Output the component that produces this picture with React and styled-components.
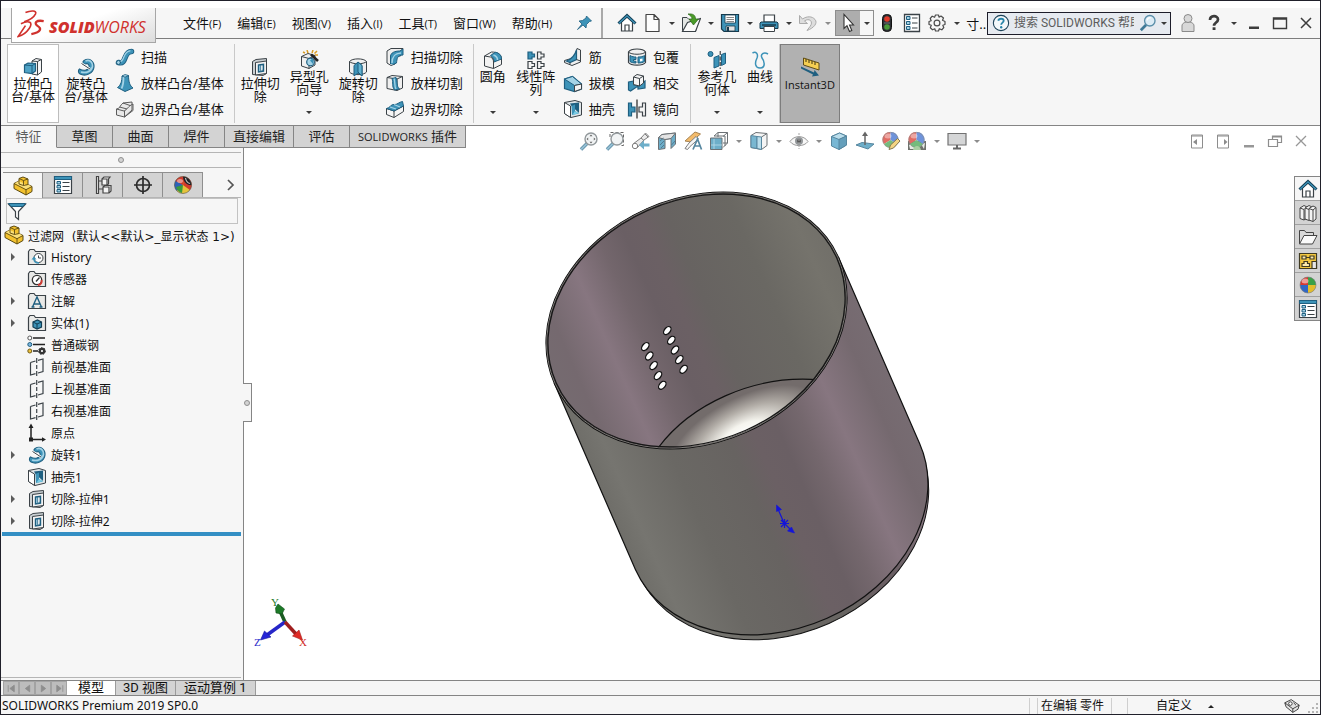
import React, { useState } from "react";
import styled, { createGlobalStyle } from "styled-components";

const GlobalStyle = createGlobalStyle`
  * {
    box-sizing: border-box;
  }

  body {
    margin: 0;
    background-color: #ffffff;
    color: #111111;
    font-family: "Noto Sans", "Noto Sans CJK SC", sans-serif;
    font-size: 13px;
  }

  button {
    margin: 0;
    padding: 0;
    border: none;
    background: none;
    color: inherit;
    font: inherit;
  }

  small {
    font-family: "Open Sans", sans-serif;
    font-size: 11px;
  }
`;

const Window = styled.div`
  display: flex;
  flex-direction: column;
  height: 100vh;
  min-height: 560px;
  border: 1px solid #20202a;
  overflow: hidden;
`;

const Icon = styled.svg`
  display: block;
  flex: none;
  width: ${(props) => props.$size || 20}px;
  height: ${(props) => props.$size || 20}px;
  opacity: ${(props) => (props.$faded ? 0.75 : 1)};
`;

const TitleBar = styled.header`
  display: flex;
  flex: none;
  height: 38px;
  border-top: 7px solid #ffffff;
  border-bottom: 1px solid #7d7d7d;
  background-color: #f6f6f6;
`;

const Logo = styled.a`
  position: relative;
  z-index: 1;
  display: flex;
  flex: none;
  align-items: center;
  height: 35px;
  width: 145px;
  margin-left: 10px;
  padding: 0 4px 2px 5px;
  border: 1px solid #a6a6a6;
  border-top: none;
  background: linear-gradient(160deg, #ffffff 45%, #dcdcdc);
  color: #d0312d;
  font-family: "Open Sans", sans-serif;
  font-size: 16px;
  font-style: italic;
  text-decoration: none;

  b {
    font-weight: 800;
  }
`;

const LogoMark = styled.svg`
  flex: none;
  width: 28px;
  height: 30px;
  margin-right: 4px;
`;

const LogoText = styled.span`
  padding-top: 5px;
`;

const MenuBar = styled.nav`
  display: flex;
  flex: none;
  align-items: center;
  gap: 16px;
  padding-left: 27px;
`;

const MenuItem = styled.button`
  font-size: 13px;
  line-height: 30px;
  white-space: nowrap;
`;

const PinButton = styled.button`
  padding: 0 7px 0 6px;
`;

const QuickTools = styled.div`
  display: flex;
  flex: none;
  align-items: center;
  gap: 5px;
  padding-left: 14px;
  border-left: 2px solid #a9a9a9;
`;

const ToolButton = styled.button`
  display: flex;
  flex: none;
  align-items: center;
  justify-content: center;
  min-width: 20px;
  height: 24px;
`;

const CaretMark = styled.span`
  display: block;
  flex: none;
  width: ${(props) => props.$wide || 9}px;

  &::after {
    content: "";
    display: block;
    width: 0;
    margin: 0 auto;
    border: 3px solid transparent;
    border-top-color: ${(props) => (props.$muted ? "#8c8c8c" : "#3a3a3a")};
    border-bottom: none;
  }
`;

const SelectTool = styled.div`
  display: flex;
  align-items: center;
  width: 39px;
  height: 26px;
  margin: 0 -2px;
  border: 1px solid #8d8d8d;

  button:first-child {
    width: 24px;
    height: 24px;
    background-color: #adadad;
  }

  button:last-child {
    flex: 1;
  }
`;

const WindowTools = styled.div`
  display: flex;
  flex: 1;
  align-items: center;
  justify-content: flex-end;
  gap: 6px;
  min-width: 0;
  padding-right: 4px;
`;

const SearchBox = styled.label`
  display: flex;
  flex: 0 1 184px;
  align-items: center;
  min-width: 90px;
  height: 23px;
  margin-right: 1px;
  padding: 0 0 0 4px;
  border: 1px solid #1d1d2a;
  background-color: #e6eaf0;

  input {
    flex: 1;
    min-width: 0;
    height: 20px;
    margin: 0 5px 0 4px;
    padding: 0;
    border: none;
    outline: none;
    background: none;
    color: #555555;
    font-family: Roboto, "Noto Sans CJK SC", sans-serif;
    font-size: 12px;
  }

  input::placeholder {
    color: #5c5c5c;
    opacity: 1;
  }
`;

const Ribbon = styled.section`
  display: flex;
  flex: none;
  height: 87px;
  padding: 5px 6px 2px;
  border-bottom: 1px solid #858585;
  background-color: #f6f6f6;
`;

const RibbonGroup = styled.div`
  display: flex;
  flex: none;
  padding: 0 ${(props) => props.$end}px 0 1px;
  border-right: 1px solid #c9c9c9;

  &:first-child {
    padding-left: 0;
  }
`;

const BigButton = styled.button`
  display: flex;
  flex: none;
  flex-direction: column;
  align-items: center;
  width: ${(props) => props.$width}px;
  height: 79px;
  padding: ${(props) => (props.$menu ? 5 : 12)}px 0 8px;
  border: 1px solid ${(props) => props.$edge || "transparent"};
  background-color: ${(props) => props.$fill || "transparent"};
  font-size: 13px;
  line-height: 13px;
  white-space: pre-line;
  text-align: center;

  ${CaretMark} {
    margin-top: auto;
  }

  small {
    line-height: 16px;
  }
`;

const SmallColumn = styled.div`
  display: grid;
  flex: none;
  grid-template-rows: repeat(3, 26px);
  margin-left: 2px;

  & + & {
    margin-left: 12px;
  }
`;

const SmallButton = styled.button`
  display: flex;
  align-items: center;
  gap: 6px;
  padding-bottom: 1px;
  font-size: 13px;
  white-space: nowrap;
`;

const CommandRow = styled.div`
  position: relative;
  z-index: 1;
  display: flex;
  flex: none;
  align-items: flex-start;
  height: 22px;
`;

const RibbonTabs = styled.nav`
  display: flex;
  flex: none;
`;

const RibbonTab = styled.button`
  min-width: 56px;
  height: 22px;
  padding: 0 8px;
  border-right: 1px solid #858585;
  border-bottom: 1px solid ${(props) => (props.$active ? "#f6f6f6" : "#858585")};
  background-color: ${(props) => (props.$active ? "#f6f6f6" : "#d3d3d3")};
  color: ${(props) => (props.$active ? "#5c5c5c" : "#222222")};
  font-family: Roboto, "Noto Sans CJK SC", sans-serif;
  font-size: 13px;
  line-height: 20px;
  white-space: nowrap;
`;

const ViewTools = styled.div`
  display: flex;
  flex: 1;
  align-items: center;
  gap: 6px;
  height: 30px;
  padding: 0 9px 0 113px;
`;

const Spacer = styled.span`
  flex: 1;
`;

const Main = styled.main`
  display: flex;
  flex: 1;
  min-height: 0;
`;

const SidePanel = styled.aside`
  position: relative;
  display: flex;
  flex: none;
  flex-direction: column;
  width: 243px;
  border-right: 1px solid #858585;
  background-color: #f6f6f6;
`;

const PanelGrip = styled.div`
  flex: none;
  display: flex;
  align-items: center;
  justify-content: center;
  height: 16px;
  margin: 4px 2px 4px 0;
  border-top: 1px solid #b5b5b5;
  border-bottom: 1px solid #b5b5b5;
`;

const GripDot = styled.span`
  width: 6px;
  height: 6px;
  border: 1px solid #8f8f8f;
  border-radius: 50%;
  background-color: #d3d3d3;
`;

const CollapseHandle = styled.button`
  position: absolute;
  z-index: 1;
  top: 235px;
  right: -9px;
  display: flex;
  align-items: center;
  justify-content: center;
  width: 9px;
  height: 39px;
  border: 1px solid #858585;
  border-left: none;
  background-color: #f6f6f6;
`;

const PanelTabs = styled.div`
  display: flex;
  flex: none;
  height: 26px;
  margin: 0 2px;
  border-bottom: 1px solid #b5b5b5;
`;

const PanelTab = styled.button`
  display: flex;
  align-items: center;
  justify-content: center;
  width: 40px;
  height: ${(props) => (props.$active ? 26 : 25)}px;
  border-top: 1px solid #8f8f8f;
  border-right: 1px solid #8f8f8f;
  background-color: ${(props) => (props.$active ? "#f6f6f6" : "#d3d3d3")};
`;

const MoreTabs = styled.button`
  margin-left: auto;
  padding-right: 1px;
`;

const FilterBox = styled.label`
  display: flex;
  flex: none;
  align-items: center;
  height: 26px;
  margin: 0 5px;
  border: 1px solid #c2c2c2;

  input {
    flex: 1;
    min-width: 0;
    border: none;
    outline: none;
    background: none;
    font-size: 12px;
  }
`;

const Tree = styled.ul`
  margin: 0;
  padding: 0;
  list-style: none;
  font-size: 12px;
`;

const TreeRow = styled.li`
  display: flex;
  align-items: center;
  gap: 4px;
  height: 22px;
  padding-left: ${(props) => (props.$root ? 3 : 7)}px;
  font-family: ${(props) => (props.$root ? '"DejaVu Sans", "Noto Sans CJK SC", sans-serif' : "inherit")};
  white-space: pre;
`;

const Expander = styled.button`
  width: 15px;
  height: 16px;
  padding-left: 3px;

  &::after {
    content: "";
    display: ${(props) => (props.disabled ? "none" : "block")};
    width: 0;
    border: 4px solid transparent;
    border-left-color: #5c5c5c;
    border-right: none;
  }
`;

const RollbackBar = styled.div`
  height: 4px;
  margin: 0 2px 0 1px;
  background-color: #338fc4;
`;

const PanelFoot = styled.div`
  height: 3px;
  margin: auto 2px 0 0;
  border-top: 1px solid #b5b5b5;
`;

const Viewport = styled.section`
  flex: 1;
  min-width: 0;
  background-color: #ffffff;
`;

const Scene = styled.svg`
  display: block;
  width: 100%;
  height: 100%;

  text {
    font-family: "Liberation Serif", serif;
    font-size: 11px;
  }
`;

const TaskPane = styled.nav`
  align-self: flex-start;
  flex: none;
  width: 26px;
  margin-top: 28px;
  border: 1px solid #858585;
  border-right: none;
`;

const TaskButton = styled.button`
  display: flex;
  align-items: center;
  justify-content: center;
  width: 25px;
  height: 24px;
  border-bottom: 1px solid #a0a0a0;
  background-color: ${(props) => (props.$active ? "#f6f6f6" : "#d3d3d3")};

  &:last-child {
    height: 23px;
    border-bottom: none;
  }
`;

const SheetBar = styled.nav`
  display: flex;
  flex: none;
  height: 16px;
  padding-left: 2px;
  border-top: 1px solid #858585;
  border-bottom: 1px solid #858585;
  background-color: #f6f6f6;
`;

const SheetStep = styled.button`
  display: flex;
  align-items: center;
  justify-content: center;
  width: 16px;
  height: 14px;
  border: 1px solid #a3a3a3;
  background-color: #bdbdbd;
`;

const SheetTab = styled.button`
  height: 14px;
  padding: 0 ${(props) => props.$pad || 8}px;
  border-right: 1px solid #9b9b9b;
  background-color: ${(props) => (props.$active ? "#ffffff" : "#d3d3d3")};
  font-family: Roboto, "Noto Sans CJK SC", sans-serif;
  font-size: 13px;
  line-height: 12px;
  white-space: nowrap;
`;

const StatusBar = styled.footer`
  display: flex;
  flex: none;
  align-items: center;
  height: 18px;
  padding: 2px 0 0 1px;
  background-color: #f6f6f6;
  font-size: 12px;
  line-height: 18px;
`;

const StatusCell = styled.span`
  width: ${(props) => props.$width}px;
  height: 16px;
  padding-left: ${(props) => props.$inset || 0}px;
  border-left: 1px solid #cfcfcf;
  line-height: 16px;
  white-space: nowrap;
`;

const CustomUnits = styled.button`
  display: flex;
  align-items: center;
  gap: 16px;
  margin-right: 70px;
  font-size: 12px;

  &::after {
    content: "";
    border: 3px solid transparent;
    border-top: none;
    border-bottom-color: #222222;
  }
`;

const line = "#3b4247";
const blue = "#3d93b8";
const pale = "#a5d3e6";
const deep = "#1f5f80";

const ball = (
  <g>
    <circle cx="10" cy="10" r="8.5" fill="#d9b62c" />
    <path d="M10 10 L3 5 A8.5 8.5 0 0 0 4 16 Z" fill="#2c62b8" />
    <path d="M10 10 L2.5 6 A8.5 8.5 0 0 1 12 1.700Z" fill="#d33a2c" />
    <path d="M10 10 L4 16 A8.500 8.500 0 0 0 17 15 Z" fill="#e5c33b" />
    <path d="M10 10 L3 12 A8.500 8.500 0 0 0 9 18 Z" fill="#3a9b3c" />
    <path d="M10 10 L12 1.7 A8.500 8.500 0 0 1 17 15 Z" fill="#d33a2c" />
    <path d="M10 1.500A8.500 8.500 0 0 1 18.500 10C15 11 10 7 10 1.500Z" fill="#1f2326" />
    <path d="M12.500 3C13 6 15 8 17 8.500" fill="none" stroke="#c9bebe" strokeWidth="1.200" />
    <ellipse cx="7" cy="6" rx="3" ry="2" fill="#fff" opacity=".45" />
    <circle cx="10" cy="10" r="8.500" fill="none" stroke="#555" strokeWidth=".6" />
  </g>
);

const taskBall = (
  <g>
    <path d="M10 10V2A8 8 0 0 0 2 10Z" fill="#d83a30" />
    <path d="M10 10H18A8 8 0 0 0 10 2Z" fill="#3aa148" />
    <path d="M10 10V18A8 8 0 0 0 18 10Z" fill="#e3bd2c" />
    <path d="M10 10H2A8 8 0 0 0 10 18Z" fill="#3167c4" />
    <ellipse cx="7" cy="6" rx="3.500" ry="2.500" fill="#fff" opacity=".5" />
    <circle cx="10" cy="10" r="8" fill="none" stroke="#777" strokeWidth=".6" />
  </g>
);

const viewBall = (
  <g>
    <path d="M9.500 9V1A7.500 7.500 0 0 0 3 13Z" fill="#d83a30" />
    <path d="M9.500 9L16 13A7.500 7.500 0 0 0 9.500 1Z" fill="#3e6fd0" />
    <path d="M9.500 9L3 13A7.500 7.500 0 0 0 16 13Z" fill="#48a552" />
    <ellipse cx="7" cy="5" rx="3.500" ry="2.500" fill="#fff" opacity=".4" />
    <circle cx="9.500" cy="9" r="7.700" fill="none" stroke="#666" strokeWidth=".6" />
  </g>
);

const folder = (
  <path d="M1.500 4.500L3 2.500H7L8.500 4.500H18.500V17.500H1.500Z" fill="#e9e9e7" stroke={line} strokeWidth="1.200" />
);

const house = (
  <g>
    <path d="M4.500 9V18H15.500V9L10 4Z" fill="#fff" stroke={line} strokeWidth="1.200" />
    <path d="M8 18V12H12V18" fill="none" stroke={line} strokeWidth="1.200" />
    <path d="M1.500 10.500L10 2.500L18.500 10.500" fill="none" stroke="#123e55" strokeWidth="3" />
    <path d="M2 10.300L10 2.800L18 10.300" fill="none" stroke={blue} strokeWidth="1.300" />
  </g>
);

const magnifier = (
  <g>
    <path d="M2 18.500L8 12.500" stroke={deep} strokeWidth="3.400" />
    <path d="M2 18.500L8 12.500" stroke="#6fa9c4" strokeWidth="2" />
    <circle cx="12" cy="8" r="6" fill="#eef1f2" stroke="#6f777b" strokeWidth="1.400" />
  </g>
);

const cutExtrude = (
  <g>
    <path d="M2.500 4.500L6 2.500L16.500 1.500V16.500L13 18.500L2.500 17.500Z" fill="#c9cfd2" stroke={line} />
    <path d="M5.500 5.500L16.500 4V16.500L5.500 18Z" fill="#f2f2f2" stroke={line} />
    <path d="M8.500 8L13.500 7.200V14.200L8.500 15Z" fill={pale} stroke={deep} strokeWidth="1.400" />
    <path d="M10.700 8V14.500L13 13V8Z" fill="#fff" stroke={deep} strokeWidth=".8" />
  </g>
);

const revolve = (
  <g>
    <path
      d="M8 3.500C14 0 18.500 5 18 10C17.500 16 10 20 4 17C2 16 2 13 3.500 12C7 14 12 14 13 10C13.500 7.500 11.500 6 9.500 7C7 7.500 6 5 8 3.500Z"
      fill={blue}
      stroke={deep}
      strokeWidth="1.100"
    />
    <path d="M9.500 4C14 2 17 6 16.500 9.500C15.500 14.500 10 16.500 5 15" fill="none" stroke={pale} strokeWidth="1.600" />
    <path d="M5.500 6.500L14 12" stroke="#fff" strokeWidth="2.600" />
    <path d="M5.500 6.500L14 12" stroke={line} strokeWidth="1" />
  </g>
);

const shell = (
  <g>
    <path d="M1.500 3.500L12 1.500L18.500 3.500V16L8 18.500L1.500 14.500Z" fill="#dfe5e8" stroke={line} />
    <path d="M1.500 3.500L7.500 7V18.500L1.500 14.500Z" fill="#fff" stroke={line} />
    <path d="M7 4.500L16 3.500V14L8.500 7Z" fill={deep} />
    <path d="M8.500 7L12 5.500V12L16 14.500L9 16Z" fill={blue} />
    <path d="M12 12L16 14.300L9.500 15.800Z" fill="#79cde6" />
  </g>
);

const plane = (
  <path
    d="M3.500 5.500L8.500 4M11 3.300L16 2V14.500L11 16M8.500 16.700L3.500 18V5.500M9.700 1V6M9.700 8V12M9.700 14V19"
    fill="none"
    stroke={line}
    strokeWidth="1.200"
  />
);

const listBanner = (
  <g>
    <path d="M1.500 1.500H18.500V18.500H1.500Z" fill="#fff" stroke={line} strokeWidth="1.200" />
    <path d="M1.500 1.500H18.500V4.500H1.500Z" fill={blue} stroke={deep} />
    <path d="M4 6.500H7.500V9H4ZM4 10.500H7.500V13H4ZM4 14.500H7.500V17H4Z" fill={pale} stroke={deep} />
    <path d="M9.500 7.500H16.500M9.500 11.500H16.500M9.500 15.500H16.500" stroke={line} strokeWidth="1.200" />
  </g>
);

const part = (
  <g strokeLinejoin="round">
    <path d="M1 7.500L6 5V2.500L10 1L15 3V8.500L19 10.500V15.500L13 19L1 12.500Z" fill="#f2c12e" stroke="#5c4a10" />
    <path d="M1.500 7.500L6 5L10 7L13.500 9.500L15 8.500L18.500 10.500L13 13.500Z" fill="#fae07a" />
    <path d="M1 7.500L13 13.700V19M13 13.700L19 10.500M6 2.500L10.500 4.500L15 3M10.500 4.500V9.500L15 8.500M6 5V8L10.500 9.500" fill="none" stroke="#5c4a10" strokeWidth=".9" />
  </g>
);

const icons = {
  taskBall,
  pin: <path d="M12.500 3L17.500 8L15.500 8.500L12.500 11.500L12 15L9 12L3.500 16.500L8 11L5 8L8.500 7.500L12 5Z" fill={blue} stroke={deep} strokeWidth=".8" />,
  house,
  file: <path d="M4 1.500H12L17 6.500V18.500H4ZM12 1.500V6.500H17" fill="#fdfdfd" stroke="#444" strokeWidth="1.200" strokeLinejoin="round" />,
  open: (
    <g>
      <path d="M1.500 17.500V4.500H6L8 6.500H15V17.500Z" fill="#e3e6e4" stroke={line} />
      <path d="M1.500 18.500L6.500 9.500L19.500 5.500L14.500 18.500Z" fill="#fafafa" stroke={line} strokeWidth="1.200" />
      <path d="M7 1C12 .5 14.500 2 14.500 6H17.500L12.500 12L8 6H11C11 4 9.500 2.500 7 1Z" fill="#4a9b28" stroke="#29661a" strokeWidth=".7" />
    </g>
  ),
  save: (
    <g>
      <path d="M1.500 1.500H18.500V18.500H4L1.500 16Z" fill={blue} stroke="#173a4d" strokeWidth="1.200" />
      <path d="M5 2H15.500V10H5Z" fill="#fff" stroke="#173a4d" strokeWidth=".8" />
      <path d="M6.500 4.500H14M6.500 6.500H14M6.500 8.500H14" stroke="#888" />
      <path d="M6 13H15V18H6Z" fill="#e3e3e3" stroke="#173a4d" strokeWidth=".8" />
      <path d="M8 14V18" stroke="#173a4d" strokeWidth="2" />
    </g>
  ),
  print: (
    <g>
      <path d="M5 2H15.500V9H5Z" fill="#fff" stroke={line} strokeWidth="1.200" />
      <path d="M2 9H18L19 10V15.500H1V10Z" fill={blue} stroke="#173a4d" />
      <path d="M3 12H17" stroke="#173a4d" strokeWidth="1.500" />
      <path d="M5 13.500H15.500V18.500H5Z" fill="#fff" stroke={line} />
    </g>
  ),
  undo: <path d="M1.500 2.500V10.500H9.500L6.500 8C11 4.500 16 8.500 12 13.500L9 17.500C16 15 20 10 17 6.500C14 3 9 3 4.500 6Z" fill="#ddd" stroke="#aaa" />,
  cursor: <path d="M6 1.500V15.500L9 12.700L11.500 18.500L13.800 17.500L11.500 12H15.500Z" fill="#fff" stroke="#333" strokeWidth="1.100" />,
  traffic: (
    <g>
      <rect x="5.500" y="1.500" width="9" height="17" rx="4" fill="#2d3034" stroke="#111" />
      <circle cx="10" cy="6" r="2.800" fill="#e13a2a" />
      <circle cx="10" cy="14" r="2.800" fill="#4b9a3a" />
      <path d="M7 10H13" stroke="#70757a" />
    </g>
  ),
  list: (
    <g>
      <path d="M2.500 1.500H17.500V18.500H2.500Z" fill="#fff" stroke={line} strokeWidth="1.300" />
      <path d="M4.500 3.500H8V6.500H4.500ZM4.500 8.500H8V11.500H4.500ZM4.500 13.500H8V16.500H4.500Z" fill={pale} stroke={deep} />
      <path d="M10 5H15.500M10 10H15.500M10 15H15.500" stroke={line} strokeWidth="1.200" />
    </g>
  ),
  gear: (
    <g fill="none" stroke="#4b4b4b" strokeWidth="1.200" strokeLinejoin="round">
      <path d="M8.500 2H11.500L12 4.200L14 3L16.500 5L15.500 7.300L18 8.500V11.500L15.800 12.200L16.800 14.500L14.800 16.800L12.300 15.700L11.500 18H8.500L7.800 15.800L5.500 16.800L3.300 14.800L4.300 12.300L2 11.500V8.500L4.200 7.800L3.200 5.500L5.200 3.200L7.600 4.300Z" />
      <circle cx="10" cy="10" r="2.900" />
    </g>
  ),
  helpRing: (
    <g>
      <circle cx="10" cy="10" r="8.500" fill="#f3f8fb" stroke="#1c4258" strokeWidth="1.200" />
      <path d="M7 7.500C7.500 4.500 13 4.500 13 7.500C13 9.500 10.200 9.700 10.200 12" fill="none" stroke="#2683a8" strokeWidth="2" />
      <circle cx="10.200" cy="14.700" r="1.300" fill="#2683a8" />
    </g>
  ),
  lens: (
    <g>
      <path d="M2 18L8 12" stroke="#3f7896" strokeWidth="3" />
      <circle cx="12" cy="7.500" r="5.800" fill="#dcebf5" stroke="#5a8ea9" strokeWidth="1.500" />
      <path d="M9 7C9.500 5 11 4 13 4" fill="none" stroke="#fff" strokeWidth="1.500" />
    </g>
  ),
  user: (
    <g fill="#d8d8d8" stroke="#8a8a8a">
      <path d="M4 18.500V13C4 10 7 9 10 9S16 10 16 13V18.500Z" />
      <circle cx="10" cy="5.500" r="4" />
    </g>
  ),
  help: (
    <g>
      <path d="M6 7C6 2 14 2 14 6.500C14 9.500 10 9.500 10 12.800" fill="none" stroke="#3c3c3c" strokeWidth="2.700" />
      <path d="M8.600 14.300H11.500V17H8.600Z" fill="#3c3c3c" />
    </g>
  ),
  minimize: <path d="M5 13.500H15V16H5Z" fill="#3c3c3c" />,
  maximize: <path d="M3.500 5H16.500V15.500H3.500ZM3.500 6H16.500" fill="none" stroke="#3c3c3c" strokeWidth="1.400" />,
  close: <path d="M5 5L15 15M15 5L5 15" stroke="#3c3c3c" strokeWidth="1.500" />,
  extrude: (
    <g>
      <path d="M9 4L13 1.500L18.500 2.500V15L14.500 18L9 17Z" fill="#f5f5f5" stroke={line} />
      <path d="M14.500 4.500V18M9 4L14.500 4.500L18.500 2.500" fill="none" stroke={line} />
      <path d="M1.500 8L5 6L12.500 6.500V14L9 16.500L1.500 15.500Z" fill="#4fa3c6" stroke={deep} strokeWidth="1.200" />
      <path d="M1.500 8L9 8.700L12.500 6.500M9 8.700V16.500" fill="none" stroke={deep} />
    </g>
  ),
  revolve,
  sweep: (
    <g fill="none" strokeLinecap="round">
      <path d="M3.500 15.500C12 18 8 4.500 16.500 4.500" stroke={deep} strokeWidth="5.500" />
      <path d="M3.500 15.500C12 18 8 4.500 16.500 4.500" stroke={blue} strokeWidth="3.800" />
      <path d="M4 14.500C10 16 7 5 15 3.800" stroke={pale} strokeWidth="1.200" />
      <circle cx="3.500" cy="15.500" r="2" fill={pale} stroke={deep} />
    </g>
  ),
  loft: (
    <g>
      <path d="M7 3L13.500 2.500C13.500 9 15 13 18 15L10 18.500L2.500 14.500C6 12 7 8 7 3Z" fill={blue} stroke={deep} />
      <path d="M8.500 4C8.500 9 8 13 6.500 15.500" fill="none" stroke={pale} strokeWidth="1.800" />
      <path d="M7 3L10 4.200L13.500 2.500L10 1.500Z" fill={pale} stroke={deep} strokeWidth=".8" />
    </g>
  ),
  boundary: (
    <g fill="#e8e8e8" stroke="#5c5c5c">
      <path d="M1.500 10C5 10 5 6 8 4L17 3V11L9.500 18L1.500 16Z" />
      <path d="M1.500 10L9 12C12 11 13 7 18 5V11.500L9.500 18V12M4.500 8L12 10M8 4L15 6.500" fill="none" />
    </g>
  ),
  cutExtrude,
  holeWizard: (
    <g>
      <path d="M2.500 6.500L9 3.500L16 5.500V15L10 18.500L2.500 16Z" fill="#f0f0f0" stroke={line} />
      <path d="M2.500 6.500L10 8.500V18.500M10 8.500L16 5.500" fill="none" stroke={line} />
      <circle cx="11.500" cy="12" r="3.800" fill={pale} stroke={deep} strokeWidth="1.200" />
      <path d="M11 10.500L14 8V14Z" fill={blue} />
      <path d="M12 4.500L19 11" stroke="#222" strokeWidth="2.500" />
      <path d="M4 2L6 3M8 0L9 3M14 0L13 3M18 1L15.500 3.500M19 5L16 5" stroke="#d79b24" strokeWidth="1.500" />
    </g>
  ),
  cutRevolve: (
    <g>
      <path d="M1.500 4.500C4 1 16 1 18.500 4.500V15C16 18.500 4 18.500 1.500 15Z" fill="#f0f0f0" stroke={line} />
      <path d="M1.500 4.500C4 7.500 16 7.500 18.500 4.500" fill="none" stroke={line} />
      <path d="M10 5L14 8.500V19L10 16L6 19V8.500Z" fill={blue} stroke={deep} />
      <path d="M10 5L14 8.500V19L10 15Z" fill="#62b3d1" stroke={deep} />
    </g>
  ),
  cutSweep: (
    <g>
      <path d="M2 4L6 1.500H18L15.500 4V9C11 9 10 12 10 17L6 18.500L2 16Z" fill="#eee" stroke={line} />
      <path d="M5.500 17V9C6 6 9 4 15 4L18 2V8C12 8 12 12 11.500 16L8 17.500" fill={blue} stroke={deep} />
      <path d="M7 16C7 10 9 6.500 16 6" fill="none" stroke={pale} strokeWidth="1.500" />
    </g>
  ),
  cutLoft: (
    <g>
      <path d="M2 4.500L7 2.500L17.500 3.500V15L12 17.500L2 15.500Z" fill="#f0f0f0" stroke={line} />
      <path d="M2 4.500L12 6L17.500 3.500M12 6V17.500" fill="none" stroke={line} />
      <path d="M7 5.500L11 4.500C13 9 11 13 14.500 16L9.500 17C6.500 13 8.500 10 7 5.500Z" fill={blue} stroke={deep} />
      <path d="M9 5.500C10.500 9 9 13 11 16" fill="none" stroke={pale} strokeWidth="1.300" />
    </g>
  ),
  cutBoundary: (
    <g>
      <path d="M1.500 9.500L9 12L18.500 7V12.500L9 18.500L1.500 15.500Z" fill="#f5f5f5" stroke={line} />
      <path d="M1.500 9.500C5 9 6 5 9 5.500C12 6 14 3 17.500 2.500L18.500 7L9 12Z" fill={blue} stroke={deep} />
      <path d="M5 8L11 10M9 5.500L15 8" stroke={pale} strokeWidth="1.300" />
      <path d="M9 12V18.500" stroke={line} />
    </g>
  ),
  fillet: (
    <g>
      <path d="M1.500 6L8.500 2C14 2 18.500 4 18.500 9V14.500L10.500 18.500L1.500 16Z" fill="#f2f2f2" stroke={line} />
      <path d="M7.500 5.500C9.500 4 11 3 12.500 2.300C16 3 18.500 5 18.500 9L11 12C11 9 10 7 7.500 5.500Z" fill={blue} stroke={deep} />
      <path d="M1.500 6L7.500 7C9.500 8 10.500 9.500 10.500 12V18.500" fill="none" stroke={line} />
      <path d="M10.500 5C13.500 6 14.500 8 14.500 10" fill="none" stroke={pale} strokeWidth="1.600" />
    </g>
  ),
  pattern: (
    <g fill="#f5f5f5" stroke={line} strokeWidth="1.200">
      <path d="M2 2H6V4H8.500V7H6V9H2Z" fill={blue} stroke={deep} />
      <path d="M11.500 2H15V4H18V7H15V9H11.500ZM2 11.500H6V13.500H8.500V16.500H6V18.500H2ZM11.500 11.500H15V13.500H18V16.500H15V18.500H11.500Z" />
    </g>
  ),
  rib: (
    <g>
      <path d="M14 1.500L17.500 3V15L9 18.500L1.500 15.500V13.500L11.500 10.500Z" fill="#f0f0f0" stroke={line} />
      <path d="M13.500 3V12.500L7 15.500L3.500 14C9 12 12 8 13.500 3Z" fill={blue} stroke={deep} strokeWidth="1.200" />
      <path d="M7 15.500V17.500M13.500 12.500L17.500 14" fill="none" stroke={line} />
    </g>
  ),
  draft: (
    <g>
      <path d="M1.500 6L9.500 3.500L18.500 11V16L11.500 18.500L1.500 15.500Z" fill={blue} stroke={deep} strokeWidth="1.200" />
      <path d="M1.500 6L9.500 3.500L18.500 11L11.500 12.500Z" fill={pale} stroke={deep} />
      <path d="M11.500 12.500L18.500 11V16L11.500 18.500Z" fill="#f3f3f3" stroke={line} />
    </g>
  ),
  shell,
  wrap: (
    <g>
      <path d="M1.500 5C4 1 16 1 18.500 5V15.500C16 19 4 19 1.500 15.500Z" fill="#f0f0f0" stroke={line} strokeWidth="1.200" />
      <path d="M1.500 5C4 8 16 8 18.500 5" fill="none" stroke={line} />
      <path d="M3 8.500C5 9.800 7 10 9 10V12.500H6.500V14L9 14.300V16C6 16 4.500 15.500 3 14.500ZM11 10C14 10 16 9.500 17.500 8.500V14.500C16 15.500 14 16 11 16Z" fill={blue} stroke={deep} />
      <path d="M13 12L15.500 11.500V14L13 14.500Z" fill="#fff" />
    </g>
  ),
  intersect: (
    <g>
      <path d="M1.500 9L7 8V12H13L18 8V15L11 16V13L3.500 18L1.500 17Z" fill={blue} stroke={deep} strokeWidth="1.200" />
      <path d="M6.500 4L10 1.500L16.500 3V10L12.500 13L6.500 11.500Z" fill="#f5f5f5" stroke={line} />
      <path d="M6.500 4L12.500 5.500L16.500 3M12.500 5.500V13" fill="none" stroke={line} />
    </g>
  ),
  mirror: (
    <g>
      <path d="M1.500 4H4.500V8H8V13H4.500V17H1.500Z" fill={blue} stroke={deep} strokeWidth="1.200" />
      <path d="M18.500 4H15.500V8H12V13H15.500V17H18.500Z" fill="#f5f5f5" stroke={line} strokeWidth="1.200" />
      <path d="M10 .5V19.500" stroke="#222" strokeWidth="1.200" />
    </g>
  ),
  reference: (
    <g>
      <circle cx="3.500" cy="4" r="2.500" fill={blue} stroke={deep} />
      <path d="M7 7.500L12 5.500V16L7 18Z" fill={blue} stroke={deep} />
      <path d="M14.500 4.500L18.500 3V13.500L14.500 15.500Z" fill={blue} stroke={deep} />
      <path d="M13.200 1V19" stroke="#222" strokeDasharray="4 1.500" />
    </g>
  ),
  curves: <path d="M2.500 3C6 1 8.500 4 7 8C4.500 13 5 18 10 18C16 18 14.500 11 12 8C10 4 14 1.500 18 4" fill="none" stroke={blue} strokeWidth="1.500" />,
  instant: (
    <g>
      <path d="M3.500 1L19 6V13L3.500 8Z" fill="#f5cf52" stroke="#5e4c16" />
      <path d="M6 2V5M9 3V6M12 4V7M15 5V8" stroke="#3c3210" />
      <path d="M1 9.500L14 15.500L14.500 13L19 18.500L12 19.500L13 17.500L1 11.500Z" fill={deep} />
    </g>
  ),
  zoomFit: (
    <g>
      {magnifier}
      <path d="M12 3.500L13.500 5.200H10.500ZM12 12.500L13.500 10.800H10.500ZM7.500 8L9.200 6.500V9.500ZM16.500 8L14.800 6.500V9.500Z" fill="#333" />
    </g>
  ),
  zoomArea: (
    <g>
      <path d="M5 6V1.500H18.500V14.500H15" fill="none" stroke="#333" strokeDasharray="3 2" />
      {magnifier}
    </g>
  ),
  previousView: (
    <g>
      <path d="M2 13L10 7L14.500 2L18 5.500L13 9L6 17Z" fill="#e5e5e5" stroke="#555" />
      <path d="M10 7L13 9.500M14 3L17 6" stroke="#555" />
      <circle cx="4" cy="15" r="2.700" fill="#fff" stroke="#555" />
      <path d="M18.500 12.500H13V9.500L8 14L13 18.500V15.500H18.500Z" fill={blue} />
    </g>
  ),
  section: (
    <g>
      <path d="M1.500 6.500L5 3.500L18.500 2V13L14 17.500V7.500L8 8.500V17.500L1.500 18.500Z" fill={blue} stroke={line} />
      <path d="M1.500 6.500L5 3.500L18.500 2L14 7.500L8 8.500Z" fill="#dcdcdc" stroke={line} />
      <path d="M3 10L6.500 7M3 14L7 10M14.500 14L18 10M4 17L7 14" stroke="#164a66" strokeWidth=".9" />
    </g>
  ),
  dynamicNotes: (
    <g>
      <path d="M2 10L12 1L17.500 3L8 11Z" fill="#f0a53a" stroke="#895b1a" />
      <path d="M2 17.500L6 12L13 5.500L15.500 8L7 15.500L4.500 18.500Z" fill="#f3f3f3" stroke="#555" />
      <path d="M10 18.500L14.500 8L18.500 18.500M12 15H17" fill="none" stroke={deep} strokeWidth="1.700" />
    </g>
  ),
  orientation: (
    <g>
      <path d="M5 5L9 1.500H18.500V12L14 16.500" fill="#fff" stroke={line} />
      <path d="M14 5.500L18.500 1.500M14 12H18.500M9 1.500V6M5 5H16V15" stroke={line} fill="none" />
      <path d="M1.500 7H13V18.500H1.500Z" fill={blue} stroke={line} />
      <path d="M5 8V18M2 14H13" stroke={pale} strokeWidth=".8" />
    </g>
  ),
  displayStyle: (
    <g>
      <path d="M2 4.500L7 1.500L18 2.500V14.500L12.500 18.500L2 16.500Z" fill="#f2f2f2" stroke={line} />
      <path d="M2 4.500L8 5.500V17.500L2 16.500Z" fill="#4d9fc2" stroke={deep} />
      <path d="M8 5.500L12.500 6V18.500L8 17.500Z" fill={pale} stroke={deep} />
      <path d="M12.500 6L18 2.500" stroke={line} />
    </g>
  ),
  eye: (
    <g>
      <path d="M1 10.500C5 4 15 4 19 10.500C15 16 5 16 1 10.500Z" fill="#f5f5f5" stroke="#777" />
      <circle cx="10" cy="10" r="4" fill="#707579" />
      <circle cx="10" cy="10" r="2" fill="#222" />
      <path d="M10 2V18" stroke="#888" strokeDasharray="2 1" />
    </g>
  ),
  cube: (
    <g>
      <path d="M2.500 5.500L10.500 2L17.500 5V14L10 18.500L2.500 15Z" fill="#4ba0c6" stroke={deep} />
      <path d="M2.500 5.500L10.500 2L17.500 5L10 8.500Z" fill={pale} stroke={deep} />
      <path d="M10 8.500V18.500L17.500 14V5Z" fill="#327fa5" stroke={deep} />
    </g>
  ),
  upright: (
    <g>
      <path d="M1 14L7 11.500L19 13L13 18Z" fill={blue} stroke={deep} />
      <path d="M10 14V3" stroke="#333" strokeWidth="1.500" />
      <path d="M10 .5L13 5H7Z" fill="#333" />
    </g>
  ),
  appearance: (
    <g>
      {viewBall}
      <path d="M8 18.500L9.500 14L16.500 7.500L19 10L12.500 17Z" fill="#efc65a" stroke="#5e4c16" />
    </g>
  ),
  sceneBall: (
    <g>
      <path d="M1 10H19V19H1Z" fill="#3f433d" />
      <path d="M2 14L6 12L8 18H3ZM14 13L18 12L17 18Z" fill="#dfe3dd" />
      {viewBall}
      <path d="M6 19C7 13.500 13 13.500 14 19Z" fill="#8dc083" />
    </g>
  ),
  monitor: (
    <g>
      <path d="M1 2.500H19V14H1Z" fill="#c8c9ca" stroke="#444" strokeWidth="1.200" />
      <path d="M10 14V17" stroke="#333" strokeWidth="2" />
      <path d="M6 17.500H14" stroke="#333" strokeWidth="2" />
    </g>
  ),
  paneLeft: (
    <g>
      <path d="M4.500 4H15.500V17H4.500Z" fill="none" stroke="#8d8d8d" />
      <path d="M4.500 5H15.500" stroke="#8d8d8d" />
      <path d="M10 8V14L6 11Z" fill="#8d8d8d" />
    </g>
  ),
  paneRight: (
    <g>
      <path d="M4.500 4H15.500V17H4.500Z" fill="none" stroke="#8d8d8d" />
      <path d="M4.500 5H15.500" stroke="#8d8d8d" />
      <path d="M11 8V14L14.500 11Z" fill="#8d8d8d" />
    </g>
  ),
  minimizeDoc: <path d="M5 14H15V16.500H5Z" fill="#979797" />,
  restoreDoc: <path d="M3.500 8.500H12.500V15.500H3.500ZM7.500 8V5H16.500V11.500H13M7.500 6H16.500" fill="none" stroke="#8d8d8d" strokeWidth="1.200" />,
  closeDoc: <path d="M5 5L15 15M15 5L5 15" stroke="#979797" strokeWidth="1.300" />,
  part,
  listBanner,
  configs: (
    <g fill="#f3f3f3" stroke="#444" strokeWidth="1.200">
      <path d="M3.500 1.500H5.500V18.500H3.500ZM5.500 6H9M5.500 14H10" />
      <path d="M9 4L11 2H17L15.500 4V9L14 10H9ZM10 12L12 10.500H18V16L16 18H10Z" />
      <path d="M9 4H14V10M10 12H16V18" fill="none" />
    </g>
  ),
  target: (
    <g fill="none" stroke="#2d2d2d" strokeWidth="1.700">
      <circle cx="10" cy="10" r="6.500" />
      <path d="M10 1V19M1 10H19" />
    </g>
  ),
  ball,
  funnel: (
    <g>
      <path d="M1.500 3H18.500L11.500 10.500V18.500L8.500 16V10.500Z" fill="#fff" stroke={line} strokeWidth="1.200" />
      <path d="M1.500 2.500H18.500L16 5.500H4Z" fill={blue} stroke={deep} />
    </g>
  ),
  history: (
    <g>
      {folder}
      <circle cx="11.500" cy="11" r="4.500" fill="#fff" stroke={line} />
      <path d="M11.500 8.500V11H14" fill="none" stroke={line} />
      <path d="M12 16C8 16 7 14 7 12" fill="none" stroke={blue} strokeWidth="1.500" />
      <path d="M4.500 12.500L7 9.500L9.500 12.500Z" fill={blue} />
    </g>
  ),
  sensors: (
    <g>
      {folder}
      <circle cx="10" cy="11" r="4.700" fill="#fff" stroke="#333" strokeWidth="1.300" />
      <path d="M9 12.500L12.500 8.500" stroke="#333" strokeWidth="1.300" />
      <path d="M11 16C14 16 15 13 14.500 11" fill="none" stroke="#cf3b34" strokeWidth="2" />
    </g>
  ),
  annotations: (
    <g>
      {folder}
      <path d="M5.500 16L10 6L14.500 16M7 13H13M4.500 16H7.500M12.500 16H15.500" fill="none" stroke={deep} strokeWidth="1.400" />
    </g>
  ),
  bodies: (
    <g>
      {folder}
      <path d="M6 9L10.500 7L14.500 9V14L10 16L6 14Z" fill={blue} stroke="#123e55" strokeWidth="1.200" />
      <path d="M6 9L10 11V16M10 11L14.500 9" fill="none" stroke="#123e55" />
    </g>
  ),
  material: (
    <g>
      <path d="M6 3H18M6 9.500H18M6 16H11" stroke="#222" strokeWidth="1.700" />
      <circle cx="2.800" cy="3" r="2" fill="#fff" stroke="#555" />
      <circle cx="2.800" cy="9.500" r="2" fill="#7bb5df" stroke={deep} />
      <circle cx="2.800" cy="16" r="2" fill="#edc13d" stroke="#715b15" />
      <circle cx="15" cy="16" r="2.200" fill="#fff" stroke="#333" strokeWidth="2.200" />
      <circle cx="15" cy="16" r="3.500" fill="none" stroke="#333" strokeDasharray="1.500 1.500" />
    </g>
  ),
  plane,
  origin: (
    <g>
      <path d="M4 4V16.500H16" fill="none" stroke="#222" strokeWidth="1.500" />
      <path d="M4 .5L6.500 5H1.500ZM19 16.500L15 14.200V18.800ZM2 14.500H6V18.500H2Z" fill="#222" />
    </g>
  ),
  library: (
    <g fill="#f3f3f3" stroke="#444">
      <path d="M2 5L6 2.500L9 4V15L6 17L2 15.500Z" />
      <path d="M7 5L11 2.500L14 4V15.500L11 17.500L7 16Z" />
      <path d="M11 5.500L15 3L18 4.500V16L15 18.500L11 17Z" />
      <path d="M2 5L6 6.500V17M7 5L11 6.500M11 5.500L15 7V18.500M15 7L18 4.500" fill="none" />
    </g>
  ),
  explorer: (
    <g stroke="#444" strokeLinejoin="round">
      <path d="M1.500 17V3.500H6.500L8 5.500H15.500V9" fill="#d9d9d9" />
      <path d="M1.500 17L6 8.500H19L14.500 17Z" fill="#fafafa" />
    </g>
  ),
  palette: (
    <g stroke="#3f3a22" strokeWidth="1.200">
      <path d="M1.500 2.500H18.500V17.500H1.500Z" fill="#f4c840" />
      <path d="M4 5H8V8H4ZM12 5H16V8H12ZM8 6.500H12" fill="#fbe9ae" />
      <path d="M6 10.500H9.500V12.500H11.500V15.500H4V12.500H6Z" fill="#fbe9ae" />
      <path d="M14 10.500H18.500V17.500H14Z" fill="#e8e8e8" />
    </g>
  ),
  tag: (
    <g fill="#e3e3e3" stroke="#333" strokeWidth="1.100">
      <path d="M1 6L9 2L19 9L17.500 14L11 18L2.500 11Z" />
      <path d="M1 6L11 13.500L19 9M11 13.500V18" fill="none" />
      <circle cx="8" cy="7" r="2.200" fill="#fff" />
      <path d="M12 6L15 9" />
    </g>
  ),
};

const Glyph = ({ name, size, faded }) => (
  <Icon viewBox="0 0 20 20" $size={size} $faded={faded} aria-hidden="true">
    {icons[name]}
  </Icon>
);

const menus = [
  ["文件", "(F)"],
  ["编辑", "(E)"],
  ["视图", "(V)"],
  ["插入", "(I)"],
  ["工具", "(T)"],
  ["窗口", "(W)"],
  ["帮助", "(H)"],
];

const ribbonTabs = ["特征", "草图", "曲面", "焊件", "直接编辑", "评估"];

const viewTools = [
  "zoomFit", "zoomArea", "previousView", "section", "dynamicNotes", "orientation", "caret",
  "displayStyle", "caret", "eye", "caret", "cube", "upright", "appearance", "sceneBall", "caret",
  "monitor", "caret",
];

const docTools = ["paneLeft", "paneRight", "minimizeDoc", "restoreDoc", "closeDoc"];
const panelTabs = ["part", "listBanner", "configs", "target", "ball"];
const taskTabs = ["house", "library", "explorer", "palette", "taskBall", "listBanner"];

const treeItems = [
  { icon: "history", label: "History", open: true },
  { icon: "sensors", label: "传感器" },
  { icon: "annotations", label: "注解", open: true },
  { icon: "bodies", label: "实体(1)", open: true },
  { icon: "material", label: "普通碳钢" },
  { icon: "plane", label: "前视基准面" },
  { icon: "plane", label: "上视基准面" },
  { icon: "plane", label: "右视基准面" },
  { icon: "origin", label: "原点" },
  { icon: "revolve", label: "旋转1", open: true },
  { icon: "shell", label: "抽壳1" },
  { icon: "cutExtrude", label: "切除-拉伸1", open: true },
  { icon: "cutExtrude", label: "切除-拉伸2", open: true },
];

const holes = [
  [667.3, 330.600], [671.3, 340.300], [675, 350], [679.3, 359.600], [683.600, 369.300],
  [645.3, 346.600], [649.3, 356], [653.600, 365.600], [658, 375.600], [662.3, 385.300],
];

const Big = ({ icon, label, width, menu, edge, fill }) => (
  <BigButton $width={width} $menu={menu} $edge={edge} $fill={fill}>
    <Glyph name={icon} />
    {label}
    {menu && <CaretMark />}
  </BigButton>
);

const Small = ({ items }) => (
  <SmallColumn>
    {items.map(([icon, label]) => (
      <SmallButton key={label}>
        <Glyph name={icon} />
        {label}
      </SmallButton>
    ))}
  </SmallColumn>
);

const Tool = ({ name, label, faded }) => (
  <ToolButton aria-label={label || name}>
    <Glyph name={name} faded={faded} />
  </ToolButton>
);

const Model = () => (
  <Scene viewBox="244 148 1050 532" role="img" aria-label="过滤网">
    <defs>
      <linearGradient id="inside" gradientUnits="userSpaceOnUse" x1="554" y1="384" x2="839" y2="258">
        <stop offset="0" stopColor="#756b70" />
        <stop offset=".08" stopColor="#75696f" />
        <stop offset=".21" stopColor="#877680" />
        <stop offset=".32" stopColor="#73666c" />
        <stop offset=".4" stopColor="#6a5f64" />
        <stop offset=".47" stopColor="#6b6064" />
        <stop offset=".55" stopColor="#676361" />
        <stop offset=".75" stopColor="#6a6863" />
        <stop offset=".92" stopColor="#75736c" />
        <stop offset="1" stopColor="#716f69" />
      </linearGradient>
      <linearGradient id="outside" gradientUnits="userSpaceOnUse" x1="554" y1="384" x2="839" y2="258">
        <stop offset="0" stopColor="#6f6e69" />
        <stop offset=".07" stopColor="#767570" />
        <stop offset=".25" stopColor="#6a6864" />
        <stop offset=".44" stopColor="#676361" />
        <stop offset=".52" stopColor="#6b6064" />
        <stop offset=".6" stopColor="#6a5f64" />
        <stop offset=".68" stopColor="#74676d" />
        <stop offset=".79" stopColor="#877680" />
        <stop offset=".92" stopColor="#75696f" />
        <stop offset="1" stopColor="#776c72" />
      </linearGradient>
      <radialGradient id="dome" gradientUnits="userSpaceOnUse" cx="0" cy="0" r="1" gradientTransform="translate(744 436) rotate(-28) scale(82 38)">
        <stop offset="0" stopColor="#ffffff" />
        <stop offset=".3" stopColor="#f5f4ee" />
        <stop offset=".65" stopColor="#b2ada7" />
        <stop offset="1" stopColor="#736c6b" />
      </radialGradient>
      <clipPath id="mouth">
        <ellipse cx="696.500" cy="320.500" rx="154" ry="121" transform="rotate(-23.900 696.500 320.500)" />
      </clipPath>
    </defs>
    <ellipse cx="779.500" cy="512" rx="154" ry="122" transform="rotate(-23.900 779.500 512)" fill="url(#outside)" stroke="#111" />
    <path
      d="M554.400 383.500L635.400 569.500A155 122 -23.900 0 0 919.600 443.500L838.600 257.500Z"
      fill="url(#outside)"
      stroke="#111"
      strokeWidth="1.200"
    />
    <ellipse cx="696.500" cy="320.500" rx="155.500" ry="122.400" transform="rotate(-23.900 696.500 320.500)" fill="#111" stroke="#111" />
    <ellipse cx="696.500" cy="320.500" rx="154.700" ry="121.600" transform="rotate(-23.900 696.500 320.500)" fill="none" stroke="#b5b1ad" strokeWidth=".6" />
    <g clipPath="url(#mouth)">
      <path d="M530 180H870V460H530Z" fill="url(#inside)" />
      <path d="M658 448C690 405 753 374 820 380L840 470H650Z" fill="url(#dome)" stroke="#111" strokeWidth="1.200" />
    </g>
    <ellipse cx="696.500" cy="320.500" rx="153.500" ry="120.400" transform="rotate(-23.900 696.500 320.500)" fill="none" stroke="#151515" strokeWidth="1.200" />
    {holes.map(([x, y]) => (
      <ellipse key={`${x}-${y}`} cx={x} cy={y} rx="4.600" ry="2.900" transform={`rotate(-50 ${x} ${y})`} fill="#fff" stroke="#111" strokeWidth="1.300" />
    ))}
    <g stroke="#1414d8" fill="#1414d8">
      <path d="M784 523L778 509M784 523L791 530M780 523.500H789M784.500 519V528M781 520L788 527M788 520L781 527" fill="none" strokeWidth="1.200" />
      <path d="M776.500 505L781.500 509.500L776.500 511.500ZM794.500 533L787.500 531L791.500 527Z" strokeWidth=".6" />
    </g>
    <path d="M285 622L280 611" stroke="#1b5c22" strokeWidth="3.500" />
    <path d="M278 604L284.500 609L282 614L276 613L275.500 608Z" fill="#1c7a28" stroke="#114c18" strokeWidth=".6" />
    <path d="M285 622L267 635" stroke="#2626c8" strokeWidth="3.500" />
    <path d="M260.500 640L264.500 631L271 637Z" fill="#2626d8" stroke="#18189a" strokeWidth=".6" />
    <path d="M285 622L296 634" stroke="#a01f1f" strokeWidth="3.500" />
    <path d="M302.500 640L292.500 636L299 630Z" fill="#e02a24" stroke="#a01f1f" strokeWidth=".6" />
    <text x="271" y="606" fill="#1c7a28">Y</text>
    <text x="254" y="646" fill="#2626c8">Z</text>
    <text x="299" y="646" fill="#d02a24">X</text>
  </Scene>
);

export default function App() {
  const [tab, setTab] = useState("特征");
  const [panel, setPanel] = useState("part");
  const [task, setTask] = useState("house");
  const [query, setQuery] = useState("");
  const [filter, setFilter] = useState("");

  return (
    <>
      <GlobalStyle />
      <Window>
        <TitleBar>
          <Logo href="#" aria-label="SOLIDWORKS">
            <LogoMark viewBox="50 22 86 90" aria-hidden="true">
              <g fill="none" stroke="#d0312d" strokeWidth="5">
                <path d="M76 32C92 25 112 25 107 36C102 46 86 56 72 60" />
                <path d="M62 66C88 54 100 62 88 80C80 92 66 102 54 105L76 72" />
                <path d="M132 58C108 54 102 64 112 72C126 80 126 92 94 98" strokeWidth="7" />
              </g>
            </LogoMark>
            <LogoText>
              <b>SOLID</b>WORKS
            </LogoText>
          </Logo>
          <MenuBar>
            {menus.map(([name, key]) => (
              <MenuItem key={name}>
                {name}
                <small>{key}</small>
              </MenuItem>
            ))}
            <PinButton aria-label="固定">
              <Glyph name="pin" />
            </PinButton>
          </MenuBar>
          <QuickTools>
            <Tool name="house" />
            <Tool name="file" />
            <CaretMark />
            <Tool name="open" />
            <CaretMark />
            <Tool name="save" />
            <CaretMark />
            <Tool name="print" />
            <CaretMark />
            <Tool name="undo" />
            <CaretMark $muted />
            <SelectTool>
              <ToolButton aria-label="选择">
                <Glyph name="cursor" />
              </ToolButton>
              <button aria-label="选择选项">
                <CaretMark $wide={13} />
              </button>
            </SelectTool>
            <Tool name="traffic" />
            <Tool name="list" />
            <Tool name="gear" />
            <CaretMark />
            <ToolButton>寸..</ToolButton>
          </QuickTools>
          <WindowTools>
            <SearchBox>
              <Glyph name="helpRing" size={18} />
              <input
                aria-label="搜索"
                placeholder="搜索 SOLIDWORKS 帮助"
                value={query}
                onChange={(e) => setQuery(e.target.value)}
              />
              <Glyph name="lens" size={18} />
              <CaretMark $wide={13} />
            </SearchBox>
            <Tool name="user" />
            <Tool name="help" />
            <CaretMark $wide={8} />
            <Tool name="minimize" />
            <Tool name="maximize" />
            <Tool name="close" />
          </WindowTools>
        </TitleBar>

        <Ribbon>
          <RibbonGroup $end={10}>
            <Big icon="extrude" label={"拉伸凸\n台/基体"} width={52} edge="#bdbdbd" fill="#ffffff" />
            <Big icon="revolve" label={"旋转凸\n台/基体"} width={54} />
            <Small items={[["sweep", "扫描"], ["loft", "放样凸台/基体"], ["boundary", "边界凸台/基体"]]} />
          </RibbonGroup>
          <RibbonGroup $end={10}>
            <Big icon="cutExtrude" label={"拉伸切\n除"} width={49} />
            <Big icon="holeWizard" label={"异型孔\n向导"} width={49} menu />
            <Big icon="cutRevolve" label={"旋转切\n除"} width={49} />
            <Small items={[["cutSweep", "扫描切除"], ["cutLoft", "放样切割"], ["cutBoundary", "边界切除"]]} />
          </RibbonGroup>
          <RibbonGroup $end={11}>
            <Big icon="fillet" label="圆角" width={36} menu />
            <Big icon="pattern" label={"线性阵\n列"} width={50} menu />
            <Small items={[["rib", "筋"], ["draft", "拔模"], ["shell", "抽壳"]]} />
            <Small items={[["wrap", "包覆"], ["intersect", "相交"], ["mirror", "镜向"]]} />
          </RibbonGroup>
          <RibbonGroup $end={1}>
            <Big icon="reference" label={"参考几\n何体"} width={50} menu />
            <Big icon="curves" label="曲线" width={36} menu />
          </RibbonGroup>
          <Big icon="instant" label={<small>Instant3D</small>} width={60} edge="#7d7d7d" fill="#b1b1b1" />
        </Ribbon>

        <CommandRow>
          <RibbonTabs>
            {ribbonTabs.map((name) => (
              <RibbonTab key={name} $active={tab === name} onClick={() => setTab(name)}>
                {name}
              </RibbonTab>
            ))}
            <RibbonTab $active={tab === "插件"} onClick={() => setTab("插件")}>
              <small>SOLIDWORKS</small> 插件
            </RibbonTab>
          </RibbonTabs>
          <ViewTools>
            {viewTools.map((name, index) =>
              name === "caret" ? (
                <CaretMark key={index} $wide={8} $muted />
              ) : (
                <Tool key={name} name={name} faded />
              )
            )}
            <Spacer />
            {docTools.map((name) => (
              <Tool key={name} name={name} />
            ))}
          </ViewTools>
        </CommandRow>

        <Main>
          <SidePanel>
            <PanelGrip>
              <GripDot />
            </PanelGrip>
            <PanelTabs>
              {panelTabs.map((name) => (
                <PanelTab key={name} aria-label={name} $active={panel === name} onClick={() => setPanel(name)}>
                  <Glyph name={name} />
                </PanelTab>
              ))}
              <MoreTabs aria-label="更多">
                <Icon viewBox="0 0 20 20" aria-hidden="true">
                  <path d="M8 5L13 10L8 15" fill="none" stroke="#555" strokeWidth="1.700" />
                </Icon>
              </MoreTabs>
            </PanelTabs>
            <FilterBox>
              <Glyph name="funnel" />
              <input aria-label="过滤" value={filter} onChange={(e) => setFilter(e.target.value)} />
            </FilterBox>
            <Tree>
              <TreeRow $root>
                <Glyph name="part" />
                {"过滤网  (默认<<默认>_显示状态 1>)"}
              </TreeRow>
              {treeItems.map((item) => (
                <TreeRow key={item.label}>
                  <Expander disabled={!item.open} aria-label={item.label} />
                  <Glyph name={item.icon} />
                  {item.label}
                </TreeRow>
              ))}
            </Tree>
            <RollbackBar />
            <PanelFoot />
            <CollapseHandle aria-label="折叠">
              <GripDot />
            </CollapseHandle>
          </SidePanel>
          <Viewport>
            <Model />
          </Viewport>
          <TaskPane>
            {taskTabs.map((name) => (
              <TaskButton key={name} aria-label={name} $active={task === name} onClick={() => setTask(name)}>
                <Glyph name={name} />
              </TaskButton>
            ))}
          </TaskPane>
        </Main>

        <SheetBar>
          {["M4 4V16M15 4V16L7 10Z", "M14 4V16L6 10Z", "M6 4V16L14 10Z", "M5 4V16L13 10ZM16 4V16"].map((d) => (
            <SheetStep key={d} aria-label="翻页">
              <Icon viewBox="0 0 20 20" $size={11} aria-hidden="true">
                <path d={d} fill="#8d8d8d" stroke="#8d8d8d" strokeWidth="1.500" />
              </Icon>
            </SheetStep>
          ))}
          <SheetTab $active $pad={11}>模型</SheetTab>
          <SheetTab $pad={7}>3D 视图</SheetTab>
          <SheetTab $pad={8}>运动算例 1</SheetTab>
        </SheetBar>

        <StatusBar>
          SOLIDWORKS Premium 2019 SP0.0
          <Spacer />
          <StatusCell $width={8} />
          <StatusCell $width={74} $inset={3}>在编辑 零件</StatusCell>
          <StatusCell $width={16} />
          <StatusCell $width={29} />
          <CustomUnits>自定义</CustomUnits>
          <Glyph name="tag" size={16} />
          <Icon viewBox="0 0 20 20" aria-hidden="true">
            <path d="M16 7H18V9H16ZM12 11H14V13H12ZM16 11H18V13H16ZM8 15H10V17H8ZM12 15H14V17H12ZM16 15H18V17H16Z" fill="#b5b5b5" />
          </Icon>
        </StatusBar>
      </Window>
    </>
  );
}
